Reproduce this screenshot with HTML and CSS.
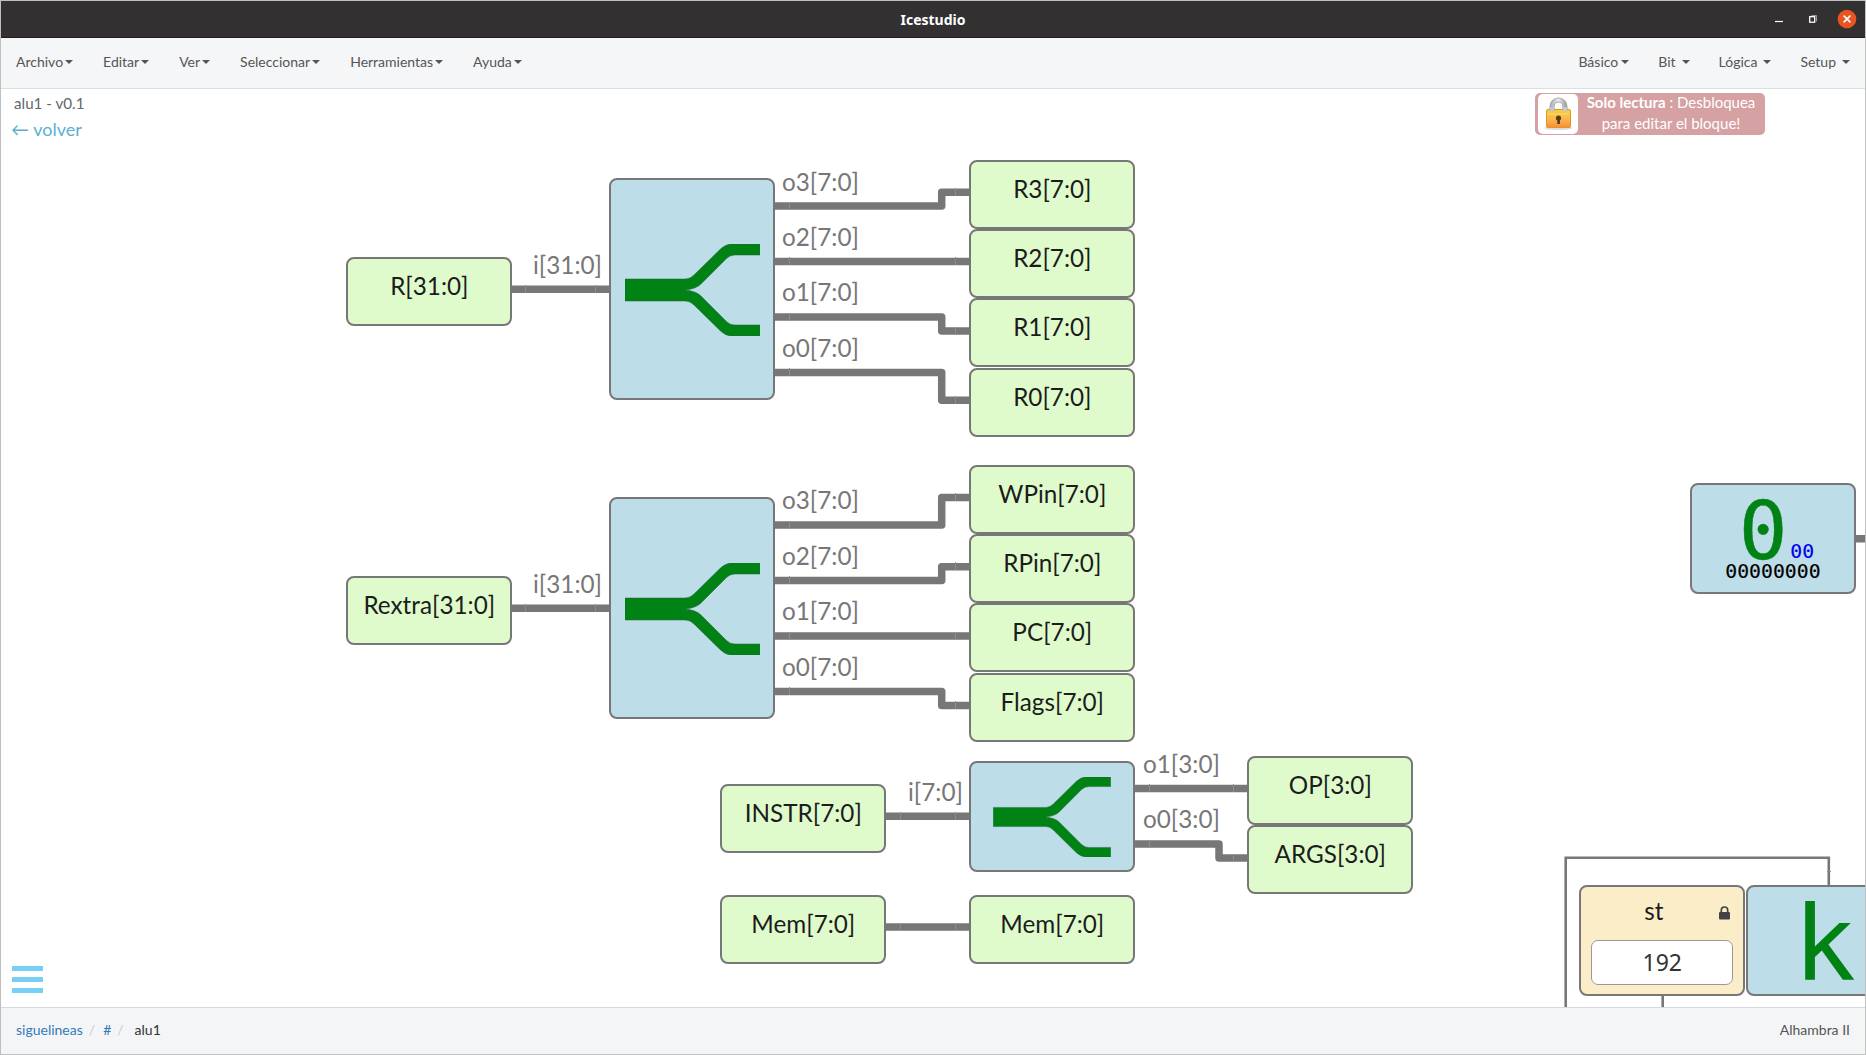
FILE: index.html
```html
<!DOCTYPE html>
<html lang="es">
<head>
<meta charset="utf-8">
<title>Icestudio</title>
<link rel="stylesheet" href="styles.css">
</head>
<body>
<div class="window">
  <header class="titlebar">
    <span class="title">Icestudio</span>
    <svg class="controls" width="96" height="37" viewBox="0 0 96 37">
      <path d="M4 20.500h8" stroke="#fff" stroke-width="1.200"/>
      <path d="M40.500 14.500h5v6" fill="none" stroke="#999" stroke-width="1"/>
      <rect x="38.700" y="15.700" width="5" height="5.500" fill="#323031" stroke="#fff" stroke-width="1.300"/>
      <circle cx="76" cy="18" r="9.300" fill="#e95420"/>
      <path d="M72.600 14.600l6.800 6.800M79.400 14.600l-6.800 6.800" stroke="#fff" stroke-width="1.600"/>
    </svg>
  </header>
  <nav class="menubar">
    <div class="menu-left"><a>Archivo</a><a>Editar</a><a>Ver</a><a>Seleccionar</a><a>Herramientas</a><a>Ayuda</a></div>
    <div class="menu-right"><a>Básico</a><a class="sp">Bit</a><a class="sp">Lógica</a><a class="sp">Setup</a></div>
  </nav>
  <main class="canvas">
    <div class="info"><div class="name">alu1 - v0.1</div><div class="back">← volver</div></div>
    <div class="readonly">
      <div class="lockbox">
        <svg width="40" height="40" viewBox="0 0 40 40">
          <defs>
            <linearGradient id="gold" x1="0" y1="0" x2="0" y2="1"><stop offset="0" stop-color="#f6cf3c"/><stop offset=".5" stop-color="#fbb84c"/><stop offset="1" stop-color="#fb8c3c"/></linearGradient>
            <linearGradient id="steel" x1="0" y1="0" x2="1" y2="0"><stop offset="0" stop-color="#b4b8bc"/><stop offset=".5" stop-color="#e8eaec"/><stop offset="1" stop-color="#a6aaaf"/></linearGradient>
          </defs>
          <ellipse cx="20.500" cy="34" rx="14" ry="2" fill="#ddd"/>
          <path d="M14 18v-5.500a6.500 6.500 0 0 1 13 0V18" fill="none" stroke="#94989d" stroke-width="5"/>
          <path d="M14 18v-5.500a6.500 6.500 0 0 1 13 0V18" fill="none" stroke="url(#steel)" stroke-width="3.600"/>
          <rect x="8.500" y="15.500" width="24" height="18" rx="1.500" fill="url(#gold)" stroke="#d99a2c"/>
          <path d="M9.500 20h22" stroke="#ffe08a" stroke-width=".8"/>
          <path d="M14 13v4.500M27 13v4.500" stroke="#c4c7ca" stroke-width="4"/>
          <circle cx="20.500" cy="24" r="2.600" fill="#5a3a10"/><path d="M19.300 24h2.600v6h-2.600z" fill="#5a3a10"/>
        </svg>
      </div>
      <div class="msg"><b>Solo lectura</b> : Desbloquea<br>para editar el bloque!</div>
    </div>

    <svg class="wires" width="1864" height="918" viewBox="1 89 1864 918">
      <g class="bus">
        <path d="M512 289.300H610M512 608.300H610M886 816.300H970M886 927H970"/>
        <path d="M775 206H941.700V192.300H970M775 261.500H970M775 317H941.700V331H970M775 372.500H941.700V400.300H970"/>
        <path d="M775 525H941.700V497.500H970M775 580.500H941.700V566.800H970M775 636H970M775 691.500H941.700V705.500H970"/>
        <path d="M1135 788.500H1248M1135 844H1219V858H1248M1856 538.700H1866"/>
      </g>
      <path class="wire" d="M1565.700 1008V857.700H1828.800V886M1662.700 995V1008"/>
      <path class="seam" d="M525.500 285v8M595.500 285v8M525.500 604v8M595.500 604v8M900.500 812v8M955.500 812v8M900.500 923v8M955.500 923v8M789.500 202v8M789.500 257v8M789.500 313v8M789.500 368v8M955.500 188v8M955.500 257v8M955.500 327v8M955.500 396v8M789.500 521v8M789.500 576v8M789.500 632v8M789.500 687v8M955.500 493v8M955.500 562v8M955.500 632v8M955.500 701v8M1149.500 784v8M1149.500 840v8M1233.500 784v8M1233.500 854v8M1827 871.500h4"/>
    </svg>

    <div class="port" style="left:532px;top:161px">i[31:0]</div>
    <div class="port" style="left:532px;top:480px">i[31:0]</div>
    <div class="port" style="left:907px;top:688px">i[7:0]</div>
    <div class="port" style="left:781px;top:78px">o3[7:0]</div>
    <div class="port" style="left:781px;top:133px">o2[7:0]</div>
    <div class="port" style="left:781px;top:188px">o1[7:0]</div>
    <div class="port" style="left:781px;top:244px">o0[7:0]</div>
    <div class="port" style="left:781px;top:396px">o3[7:0]</div>
    <div class="port" style="left:781px;top:452px">o2[7:0]</div>
    <div class="port" style="left:781px;top:507px">o1[7:0]</div>
    <div class="port" style="left:781px;top:563px">o0[7:0]</div>
    <div class="port" style="left:1142px;top:660px">o1[3:0]</div>
    <div class="port" style="left:1142px;top:715px">o0[3:0]</div>

    <div class="node io" style="left:345.300px;top:167.700px">R[31:0]</div>
    <div class="node io" style="left:345.300px;top:486.700px">Rextra[31:0]</div>
    <div class="node io" style="left:968.300px;top:70.700px">R3[7:0]</div>
    <div class="node io" style="left:968.300px;top:140px">R2[7:0]</div>
    <div class="node io" style="left:968.300px;top:209.300px">R1[7:0]</div>
    <div class="node io" style="left:968.300px;top:278.700px">R0[7:0]</div>
    <div class="node io" style="left:968.300px;top:375.800px">WPin[7:0]</div>
    <div class="node io" style="left:968.300px;top:445.100px">RPin[7:0]</div>
    <div class="node io" style="left:968.300px;top:514.400px">PC[7:0]</div>
    <div class="node io" style="left:968.300px;top:583.800px">Flags[7:0]</div>
    <div class="node io" style="left:719.300px;top:694.600px">INSTR[7:0]</div>
    <div class="node io" style="left:719.300px;top:805.700px">Mem[7:0]</div>
    <div class="node io" style="left:968.300px;top:805.700px">Mem[7:0]</div>
    <div class="node io" style="left:1246.300px;top:667px">OP[3:0]</div>
    <div class="node io" style="left:1246.300px;top:736.300px">ARGS[3:0]</div>

    <div class="node block tall" style="left:608.300px;top:89.300px"><svg width="135" height="92" viewBox="0 0 135 92"><use href="#split"/></svg></div>
    <div class="node block tall" style="left:608.300px;top:408.300px"><svg width="135" height="92" viewBox="0 0 135 92"><use href="#split"/></svg></div>
    <div class="node block" style="left:968.300px;top:672.300px"><svg width="118" height="80" viewBox="0 0 135 92"><use href="#split"/></svg></div>
    <svg width="0" height="0" class="defs"><defs><path id="split" d="M0 35H60Q65 35 69 31L95 5.500Q100.500 0 107 0H135V11H110Q105 11 101.500 14.500L76 40Q71 45 60 46Q71 47 76 52L101.500 77.500Q105 81 110 81H135V92H107Q100.500 92 95 86.500L69 61Q65 57 60 57H0Z" fill="#008215" stroke="#245c3c" stroke-width=".5"/></defs></svg>

    <div class="node block" style="left:1689.300px;top:394.300px">
      <span class="zero">0</span><span class="hex">00</span><span class="bin">00000000</span>
    </div>
    <div class="node const" style="left:1578.300px;top:796.300px">
      <span class="cname">st</span>
      <svg class="padlock" width="11" height="14" viewBox="0 0 11 14"><path d="M2.300 7V4.200a3.200 3.200 0 0 1 6.400 0V7" fill="none" stroke="#444" stroke-width="1.700"/><rect y="6" width="11" height="7.500" rx="1" fill="#444"/></svg>
      <div class="value">192</div>
    </div>
    <div class="node block" style="left:1745.300px;top:796.300px"><span class="kay">k</span></div>

    <div class="burger"><i></i><i></i><i></i></div>
  </main>
  <footer class="statusbar">
    <div class="crumbs"><a>siguelineas</a><s>/</s><a>#</a><s class="last">/</s><span>alu1</span></div>
    <div>Alhambra II</div>
  </footer>
</div>
</body>
</html>
```
FILE: styles.css
```css
* { box-sizing: border-box; }
body { margin: 0; font-family: Lato, sans-serif; color: #555; }
.window { width: 1866px; height: 1055px; border: 1px solid #c0c0c0; background: #fff; display: flex; flex-direction: column; overflow: hidden; }
.titlebar { height: 37px; flex: none; background: #323031; border-bottom: 1px solid #1f1d1e; display: flex; align-items: center; justify-content: center; position: relative; }
.title { color: #fff; font: bold 14px "Noto Sans", sans-serif; }
.controls { position: absolute; right: -2px; top: 0; }
.menubar { height: 51px; flex: none; background: #f5f6f8; border-bottom: 1px solid #dcdfe2; display: flex; justify-content: space-between; font-size: 14px; line-height: 48px; padding: 0 15px 2px 15px; }
.menu-left, .menu-right { display: flex; gap: 29px; }
.menubar a { display: flex; align-items: center; }
.menubar a::after { content: ""; margin-left: 3px; border: 4px solid transparent; border-top-color: #555; border-bottom: 0; }
.menu-left a::after { margin-left: 2px; margin-right: 1px; }
.menubar a.sp::after { margin-left: 6px; }
.canvas { position: relative; flex: 1; overflow: hidden; background: #fff; }
.info { padding: 4px 0 0 10px; }
.name { font-size: 15.200px; line-height: 20px; padding-left: 3px; color: #666; }
.back { font-size: 18px; line-height: 24px; margin-top: 4px; color: #5bb0d0; }
.readonly { position: absolute; left: 1534px; top: 4px; width: 230px; height: 42px; border-radius: 5px; background: #d5a1a3; display: flex; padding: 1px 1px 1px 3px; color: #fff; font-size: 15px; line-height: 21px; }
.lockbox { width: 40px; height: 40px; background: #fff; border-radius: 5px; flex: none; }
.msg { flex: 1; text-align: center; white-space: nowrap; margin-top: -2px; }
.wires { position: absolute; left: 0; top: 0; }
.bus path { fill: none; stroke: #777; stroke-width: 7.500; stroke-linejoin: round; }
.wire { fill: none; stroke: #777; stroke-width: 2.600; }
.seam { stroke: #8d8d8d; stroke-width: 1; fill: none; }
.port { position: absolute; font-size: 24.270px; line-height: 30px; color: #777; white-space: nowrap; }
.node { position: absolute; width: 166px; border: 2px solid #777; border-radius: 8px; }
.io { height: 69px; background: #dffbcb; color: #1c1c1c; font-size: 24.270px; line-height: 53.500px; text-align: center; }
.block { height: 111px; background: #bddde8; display: flex; align-items: center; justify-content: center; }
.block > svg { margin-top: 1px; }
.block.tall { height: 222px; }
.defs { position: absolute; }
.zero, .hex, .bin, .kay { position: absolute; line-height: 1; }
.zero { font: 81px/81px "DejaVu Sans Mono", monospace; color: #008215; left: 46.500px; top: 6px; -webkit-text-stroke: .5px #008215; }
.hex { font: 19.800px/20px "DejaVu Sans Mono", monospace; color: #0000f0; left: 98px; top: 57px; -webkit-text-stroke: .15px #0000f0; }
.bin { font: 19.800px/20px "DejaVu Sans Mono", monospace; color: #000; left: 33px; top: 77px; -webkit-text-stroke: .15px #000; }
.kay { font: 104px/104px "DejaVu Sans Mono", monospace; color: #008215; left: 45px; top: 5px; }
.const { height: 111px; background: #fcedc9; padding: 7px 10px 9px; display: flex; flex-direction: column; align-items: center; justify-content: space-between; }
.cname { font-size: 24.270px; line-height: 34px; color: #1c1c1c; margin-right: 17px; }
.padlock { position: absolute; right: 13px; top: 19px; }
.value { width: 142px; height: 45px; border: 1px solid #999; border-radius: 7px; background: #fff; color: #333; font: 23px/43px "Noto Sans", sans-serif; text-align: center; }
.burger { position: absolute; left: 11px; bottom: 14px; display: flex; flex-direction: column; gap: 6px; }
.burger i { width: 31px; height: 5px; background: #77cff3; }
.statusbar { height: 47px; flex: none; background: #f4f5f7; border-top: 1px solid #d3dbdc; display: flex; justify-content: space-between; padding: 0 15px; font-size: 14px; line-height: 44px; }
.crumbs { display: flex; }
.crumbs a { color: #337ab7; }
.crumbs s { color: #ccc; text-decoration: none; margin: 0 8px 0 6px; }
.crumbs s.last { margin-right: 11px; }
.crumbs span { color: #333; }
```
